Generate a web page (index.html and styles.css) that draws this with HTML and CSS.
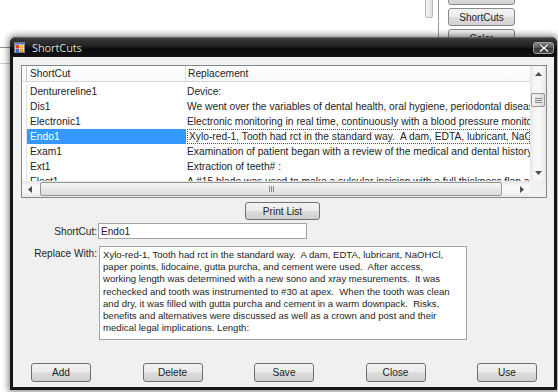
FILE: index.html
```html
<!DOCTYPE html>
<html>
<head>
<meta charset="utf-8">
<link rel="stylesheet" href="styles.css">
</head>
<body>
<div class="bg-line bg-line-a"></div>
<div class="bg-line bg-line-b"></div>
<div class="bg-scroll"></div>
<div class="bg-vline"></div>
<div class="bg-buttons">
  <div class="bg-btn">Tooth</div>
  <div class="bg-btn">ShortCuts</div>
  <div class="bg-btn">Color</div>
</div>

<div class="window">
  <div class="titlebar">
    <svg class="app-icon" width="11" height="11" viewBox="0 0 11 11">
      <rect x="0.5" y="0.5" width="10" height="10" fill="#f4f4f4" stroke="#6b7a96"/>
      <rect x="1" y="1" width="9" height="1.5" fill="#4a78c8"/>
      <rect x="1.5" y="3" width="3.5" height="3.5" fill="#e0401f"/>
      <rect x="5.5" y="3" width="4" height="3.5" fill="#f2c12e"/>
      <rect x="1.5" y="7" width="3.5" height="3" fill="#2f6fd6"/>
      <rect x="5.5" y="7" width="4" height="3" fill="#e8a02a"/>
    </svg>
    <span class="title">ShortCuts</span>
    <div class="close-btn">
      <svg width="10" height="8" viewBox="0 0 10 8">
        <path d="M1.5 1 L8.5 7 M8.5 1 L1.5 7" stroke="#2a2a2a" stroke-width="3" stroke-linecap="square"/>
        <path d="M1.5 1 L8.5 7 M8.5 1 L1.5 7" stroke="#ffffff" stroke-width="1.5" stroke-linecap="square"/>
      </svg>
    </div>
  </div>

  <div class="body">
    <div class="listview">
      <div class="lv-content">
        <div class="lv-header">
          <div class="hc hc0"></div>
          <div class="hc hc1">ShortCut</div>
          <div class="hc hc2">Replacement</div>
        </div>
        <div class="lv-rows">
          <div class="row"><div class="c0"></div><div class="c1">Denturereline1</div><div class="c2">Device:</div></div>
          <div class="row"><div class="c0"></div><div class="c1">Dis1</div><div class="c2">We went over the variables of dental health, oral hygiene, periodontal disease and caries risk.</div></div>
          <div class="row"><div class="c0"></div><div class="c1">Electronic1</div><div class="c2">Electronic monitoring in real time, continuously with a blood pressure monitor and pulse oximeter.</div></div>
          <div class="row selected"><div class="c0"></div><div class="c1">Endo1</div><div class="c2"><span class="focus">Xylo-red-1, Tooth had rct in the standard way.  A dam, EDTA, lubricant, NaOHCl, paper points</span></div></div>
          <div class="row"><div class="c0"></div><div class="c1">Exam1</div><div class="c2">Examination of patient began with a review of the medical and dental history.</div></div>
          <div class="row"><div class="c0"></div><div class="c1">Ext1</div><div class="c2">Extraction of teeth# :</div></div>
          <div class="row"><div class="c0"></div><div class="c1">Elect1</div><div class="c2">A #15 blade was used to make a sulcular incision with a full thickness flap and bone removal</div></div>
        </div>
      </div>
      <div class="vscroll">
        <div class="arrow-btn"><svg width="7" height="4" viewBox="0 0 7 4"><path d="M0 4 L3.5 0 L7 4 Z" fill="#4d4d4d"/></svg></div>
        <div class="vtrack">
          <div class="vthumb"><span></span><span></span><span></span></div>
        </div>
        <div class="arrow-btn"><svg width="7" height="4" viewBox="0 0 7 4"><path d="M0 0 L3.5 4 L7 0 Z" fill="#4d4d4d"/></svg></div>
      </div>
      <div class="hscroll">
        <div class="arrow-btn h"><svg width="4" height="7" viewBox="0 0 4 7"><path d="M4 0 L0 3.5 L4 7 Z" fill="#4d4d4d"/></svg></div>
        <div class="htrack">
          <div class="hthumb"><span></span><span></span><span></span></div>
        </div>
        <div class="arrow-btn h"><svg width="4" height="7" viewBox="0 0 4 7"><path d="M0 0 L4 3.5 L0 7 Z" fill="#4d4d4d"/></svg></div>
      </div>
      <div class="corner"></div>
    </div>

    <div class="print-row">
      <div class="btn print-btn">Print List</div>
    </div>

    <div class="field-row">
      <div class="label">ShortCut:</div>
      <div class="input">Endo1</div>
    </div>

    <div class="field-row replace-row">
      <div class="label">Replace With:</div>
      <div class="textarea">Xylo-red-1, Tooth had rct in the standard way.  A dam, EDTA, lubricant, NaOHCl,
paper points, lidocaine, gutta purcha, and cement were used.  After access,
working length was determined with a new sono and xray mesurements.  It was
rechecked and tooth was instrumented to #30 at apex.  When the tooth was clean
and dry, it was filled with gutta purcha and cement in a warm downpack.  Risks,
benefits and alternatives were discussed as well as a crown and post and their
medical legal implications. Length:</div>
    </div>

    <div class="button-row">
      <div class="btn">Add</div>
      <div class="btn">Delete</div>
      <div class="btn">Save</div>
      <div class="btn">Close</div>
      <div class="btn">Use</div>
    </div>
  </div>
</div>
</body>
</html>
```

FILE: styles.css
```css
* { box-sizing: border-box; }
html, body { margin: 0; padding: 0; }
body {
  width: 558px;
  height: 392px;
  position: relative;
  overflow: hidden;
  background: #ffffff;
  font-family: "Liberation Sans", Arial, sans-serif;
  font-size: 9.6px;
  color: #1e1e1e;
}

/* background application pieces */
.bg-line { position: absolute; left: 0; width: 12px; height: 1px; }
.bg-line-a { top: 47px; background: #8c8c8c; }
.bg-line-b { top: 63px; background: #d0d0d0; }
.bg-scroll {
  position: absolute; left: 425px; top: -4px; width: 8px; height: 22px;
  border: 1px solid #b9b9b9; border-radius: 2px;
  background: linear-gradient(to right, #f6f6f6, #dedede);
}
.bg-vline { position: absolute; left: 438px; top: 0; width: 1px; height: 40px; background: #9c9c9c; }
.bg-buttons {
  position: absolute; left: 448px; top: -13px; width: 67px;
  display: flex; flex-direction: column; gap: 3px;
}
.bg-btn {
  height: 18px; border: 1px solid #8a8a8a; border-radius: 3px;
  background: linear-gradient(#f3f3f3 0%, #ececec 50%, #dedede 50%, #d2d2d2 100%);
  display: flex; align-items: center; justify-content: center;
  color: #1e1e1e;
  font-size: 10px;
}

/* window */
.window {
  position: absolute; left: 10px; top: 37px; width: 547px; height: 353px;
  background: #161616;
  border-radius: 6px 6px 0 0;
  box-shadow: 0 0 6px 2px rgba(0, 0, 0, 0.45);
  display: flex; flex-direction: column;
}
.titlebar {
  height: 20px; flex: none;
  border-radius: 6px 6px 0 0;
  background: linear-gradient(#6e6e6e 0px, #363636 2px, #222222 9px, #0b0b0b 12px, #131313 20px);
  display: flex; align-items: center;
  padding-left: 4px; padding-right: 3px;
}
.app-icon { flex: none; margin-top: 1px; }
.title {
  margin-left: 7px;
  font-family: "Open Sans", "Noto Sans", sans-serif;
  font-size: 11px;
  color: #dcdcdc;
  letter-spacing: -0.1px;
}
.close-btn {
  margin-left: auto; margin-top: 1px;
  width: 21px; height: 12px;
  border: 1px solid #9a9a9a; border-radius: 3px;
  background: linear-gradient(#8a8a8a, #555555 50%, #3a3a3a 51%, #4e4e4e);
  display: flex; align-items: center; justify-content: center;
}

.body {
  flex: 1;
  margin: 0 3px 3px 3px;
  background: #f0f0f0;
  display: flex; flex-direction: column;
}

/* list view */
.listview {
  margin: 8px 0 0 8px;
  width: 526px; height: 133px; flex: none;
  border: 1px solid #828790;
  background: #ffffff;
  display: grid;
  grid-template-columns: 1fr 16px;
  grid-template-rows: 1fr 16px;
  font-size: 10.25px;
}
.lv-content { overflow: hidden; grid-column: 1; grid-row: 1; }
.lv-header {
  height: 16px; display: flex;
  border-bottom: 1px solid #d5d5d5;
  background: linear-gradient(#ffffff, #f7f8fa);
}
.hc { display: flex; align-items: center; border-right: 1px solid #dcdcdc; white-space: nowrap; color: #1e1e1e; }
.hc0 { width: 5px; flex: none; border-right-color: #c8c8c8; }
.hc1 { width: 159px; flex: none; padding-left: 3px; }
.hc2 { flex: 1; padding-left: 2px; border-right: none; }
.lv-rows { padding-top: 2px; }
.row { height: 15px; display: flex; white-space: pre; }
.row > div { display: flex; align-items: center; overflow: hidden; }
.c0 { width: 5px; flex: none; border-right: 1px solid #e2e2e2; }
.c1 { width: 159px; flex: none; padding-left: 3px; }
.c2 { flex: 1; padding-left: 1px; }
.row.selected .c1 { background: #3399ff; color: #ffffff; }
.focus {
  display: block; width: 100%; height: 15px; line-height: 13px;
  padding-left: 1px;
  border: 1px dotted #555555;
  white-space: pre; overflow: hidden;
}

.vscroll {
  grid-column: 2; grid-row: 1;
  display: flex; flex-direction: column;
  background: linear-gradient(to right, #e6e6e6, #f7f7f7 30%, #f7f7f7 70%, #e6e6e6);
}
.arrow-btn { height: 16px; flex: none; display: flex; align-items: center; justify-content: center; }
.arrow-btn.h { width: 16px; height: auto; }
.vtrack { flex: 1; padding-top: 11px; }
.vthumb {
  margin: 0 1px; height: 14px;
  border: 1px solid #959595; border-radius: 2px;
  background: linear-gradient(to right, #f5f5f5, #dcdcdc);
  display: flex; flex-direction: column; align-items: center; justify-content: center; gap: 1px;
}
.vthumb span { width: 7px; height: 1px; background: #8a8a8a; }

.hscroll {
  grid-column: 1; grid-row: 2;
  display: flex;
  background: linear-gradient(#e6e6e6, #f7f7f7 30%, #f7f7f7 70%, #e6e6e6);
}
.htrack { flex: 1; padding-right: 12px; display: flex; }
.hthumb {
  flex: 1; margin: 1px 0 1px 2px;
  border: 1px solid #959595; border-radius: 2px;
  background: linear-gradient(#f5f5f5, #dcdcdc);
  display: flex; align-items: center; justify-content: center; gap: 1px;
}
.hthumb span { width: 1px; height: 6px; background: #8a8a8a; }
.corner { grid-column: 2; grid-row: 2; background: #f0f0f0; }

/* buttons */
.btn {
  height: 19px; width: 60px; flex: none;
  border: 1px solid #707070; border-radius: 3px;
  background: linear-gradient(#f2f2f2 0%, #ebebeb 50%, #dddddd 50%, #cfcfcf 100%);
  display: flex; align-items: center; justify-content: center;
  color: #1e1e1e;
  font-size: 10.1px;
}
.print-row { margin-top: 4px; padding-left: 232px; display: flex; }
.print-btn { width: 75px; height: 18px; }

.field-row { display: flex; margin-top: 3px; }
.label {
  width: 85px; flex: none; text-align: right; padding-right: 1px;
  display: flex; align-items: center; justify-content: flex-end;
  font-size: 10.1px;
}
.input {
  width: 209px; height: 16px;
  border: 1px solid #a3a3a3; background: #ffffff;
  padding-left: 2px;
  display: flex; align-items: center;
  font-size: 10.1px;
}
.replace-row { margin-top: 7px; }
.replace-row .label { align-items: flex-start; padding-top: 2px; line-height: 12.2px; }
.textarea {
  margin-left: 1px;
  width: 368px; height: 94px;
  border: 1px solid #a3a3a3; background: #ffffff;
  padding: 2px 3px;
  line-height: 12.2px;
  white-space: pre;
  overflow: hidden;
}
.button-row { margin-top: 23px; padding-left: 18px; display: flex; gap: 51.5px; }
```
